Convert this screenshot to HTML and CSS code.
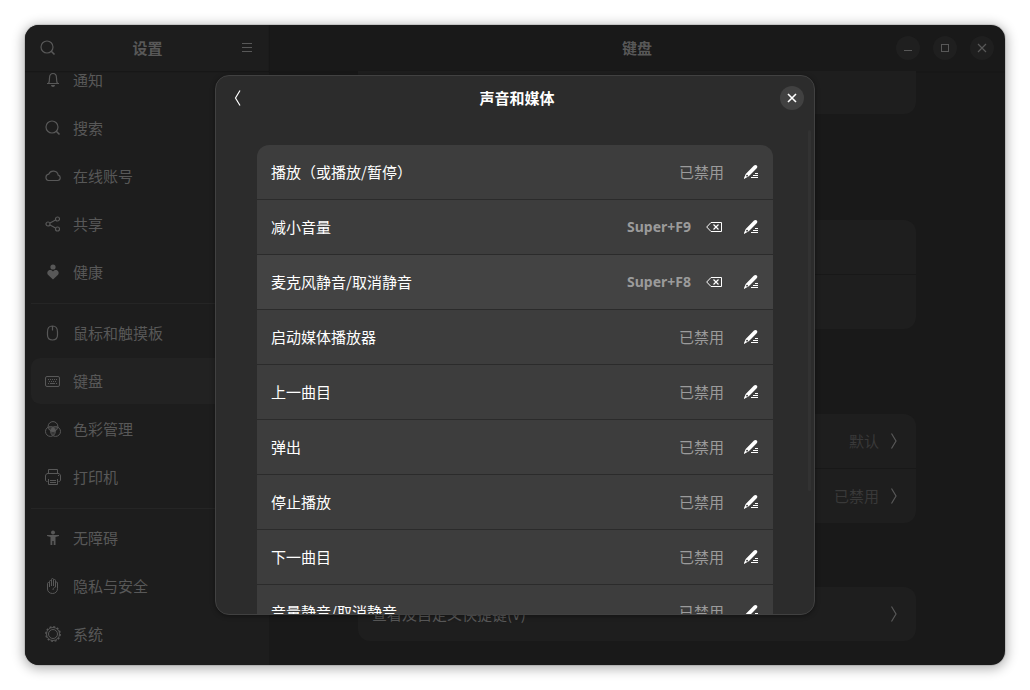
FILE: index.html
```html
<!DOCTYPE html>
<html lang="zh-CN">

<head>
    <meta charset="UTF-8">
    <meta name="viewport" content="width=device-width, initial-scale=1">
    <title>键盘</title>
    <link rel="stylesheet" href="styles.css">
</head>

<body>
    <svg class="sprite" aria-hidden="true">
        <symbol id="i-edit" viewBox="0 0 16 16">
            <path fill="currentColor" fill-rule="evenodd" d="M11 1.600c.9-.9 2-.9 2.800-.2.800.8.700 1.900-.1 2.800L5.800 12.300 1 15v-1l1.700-4z M3.400 11a.9.9 0 1 0 1.300 1.300.9.900 0 0 0-1.300-1.300z"/>
            <path fill="currentColor" d="M12 9h3v1h-3zM10 11h5v1h-5zM8 13h7v1H8z"/>
        </symbol>
        <symbol id="i-clear" viewBox="0 0 16 16">
            <path fill="none" stroke="currentColor" d="M5 3.500h10.500v9H5L.700 8z"/>
            <path fill="none" stroke="currentColor" stroke-width="1.200" d="M7.500 5.500l5 5M12.500 5.500l-5 5"/>
        </symbol>
        <symbol id="i-next" viewBox="0 0 16 16">
            <path fill="none" stroke="currentColor" stroke-width="1.200" d="M5.500.500L10 8l-4.500 7.500"/>
        </symbol>
        <symbol id="i-close" viewBox="0 0 16 16">
            <path fill="none" stroke="currentColor" stroke-width="1.600" d="M4 4l8 8M12 4l-8 8"/>
        </symbol>
        <symbol id="i-search" viewBox="0 0 16 16">
            <circle cx="7" cy="7" r="6" fill="none" stroke="currentColor" stroke-width="1.200"/>
            <path fill="none" stroke="currentColor" stroke-width="1.600" d="M11 11l3.500 3.500"/>
        </symbol>
    </svg>

    <div class="window">
        <aside class="sidebar">
            <header class="bar">
                <button class="icon-btn" aria-label="搜索"><svg class="icon"><use href="#i-search"/></svg></button>
                <h2 class="title">设置</h2>
                <button class="icon-btn" aria-label="菜单"><svg class="icon" viewBox="0 0 16 16"><path fill="currentColor" d="M3 3h10v1H3zM3 7h10v1H3zM3 11h10v1H3z"/></svg></button>
            </header>
            <nav class="nav">
                <a href="#" class="nav-item">
                    <svg class="icon" viewBox="0 0 16 16"><path fill="none" stroke="currentColor" stroke-width="1.200" d="M2 11.500h12M3.500 11.500c1-1.500 1-3 1-5.500C4.500 3 6 1.500 8 1.500S11.500 3 11.500 6c0 2.500 0 4 1 5.500"/><path fill="currentColor" d="M6 13h4c0 1.200-1 2-2 2s-2-.800-2-2z"/></svg>
                    <span>通知</span>
                </a>
                <a href="#" class="nav-item"><svg class="icon"><use href="#i-search"/></svg><span>搜索</span></a>
                <a href="#" class="nav-item">
                    <svg class="icon" viewBox="0 0 16 16"><path fill="none" stroke="currentColor" stroke-width="1.200" d="M3.500 12.500h9.300a2.700 2.700 0 0 0 .4-5.300A5 5 0 0 0 3.700 6.200a3.200 3.200 0 0 0-.2 6.300z"/></svg>
                    <span>在线账号</span>
                </a>
                <a href="#" class="nav-item">
                    <svg class="icon" viewBox="0 0 16 16"><g fill="none" stroke="currentColor" stroke-width="1.200"><circle cx="3" cy="8" r="2"/><circle cx="12.500" cy="3" r="2"/><circle cx="12.500" cy="13" r="2"/><path d="M5 7l5.500-3M5 9l5.500 3"/></g></svg>
                    <span>共享</span>
                </a>
                <a href="#" class="nav-item">
                    <svg class="icon" viewBox="0 0 16 16"><g fill="currentColor"><circle cx="8" cy="3" r="2.600"/><path d="M8 15.400L3.200 11C1.200 8.800 2.900 6 5.200 6 6.500 6 7.400 6.600 8 7.600 8.600 6.600 9.500 6 10.800 6c2.300 0 4 2.800 2 5z"/></g></svg>
                    <span>健康</span>
                </a>
                <hr class="nav-line">
                <a href="#" class="nav-item">
                    <svg class="icon" viewBox="0 0 16 16"><path fill="none" stroke="currentColor" stroke-width="1.200" d="M2.500 7c0-4 1.300-6 5-6s5 2 5 6v3c0 3-2 5-5 5s-5-2-5-5zM7.500 1v4.500"/></svg>
                    <span>鼠标和触摸板</span>
                </a>
                <a href="#" class="nav-item nav-item-active" aria-current="page">
                    <svg class="icon" viewBox="0 0 16 16"><rect x=".5" y="3.500" width="14" height="10" rx="1.500" fill="none" stroke="currentColor"/><path stroke="currentColor" stroke-dasharray="1 1" d="M3 6.500h10M4 8.500h8"/><path stroke="currentColor" d="M3 10.500h1M5 10.500h5M11 10.500h1"/></svg>
                    <span>键盘</span>
                </a>
                <a href="#" class="nav-item">
                    <svg class="icon" viewBox="0 0 16 16"><g fill="none" stroke="currentColor"><circle cx="8" cy="5.500" r="4.900"/><circle cx="5.400" cy="10.500" r="4.900"/><circle cx="10.600" cy="10.500" r="4.900"/></g><path fill="currentColor" opacity=".45" d="M3.500 6Q8 4.500 12.500 6 12 9 10.300 10.300 9.800 13 8 14.500 6.200 13 5.700 10.300 4 9 3.500 6z"/><path fill="currentColor" d="M8 6.500c1.500 1 2.400 2 2.400 3.800-1.400.6-3.400.6-4.800 0C5.600 8.500 6.500 7.500 8 6.500z"/></svg>
                    <span>色彩管理</span>
                </a>
                <a href="#" class="nav-item">
                    <svg class="icon" viewBox="0 0 16 16"><path fill="none" stroke="currentColor" d="M3.500 4.500v-4h9v4M2.500 12.500C1.200 12.500.500 12 .500 11V7c0-1.500 1-2.500 2.500-2.500h10c1.500 0 2.500 1 2.500 2.500v4c0 1-.7 1.500-2 1.500M3.500 10v5.500h9V10M5 11.500h6M5 13.500h6"/><path fill="currentColor" d="M13 6h1v1h-1z"/></svg>
                    <span>打印机</span>
                </a>
                <hr class="nav-line">
                <a href="#" class="nav-item">
                    <svg class="icon" viewBox="0 0 16 16"><g fill="currentColor"><circle cx="8" cy="2.500" r="2"/><path d="M2 5h12v1l-3.500 1v8H8.700v-4H7.300v4H5.500V7L2 6z"/></g></svg>
                    <span>无障碍</span>
                </a>
                <a href="#" class="nav-item">
                    <svg class="icon" viewBox="0 0 16 16"><path fill="none" stroke="currentColor" d="M4.500 9V3.500q0-1 1-1t1 1V8V1.500q0-1 1-1t1 1V8V2.500q0-1 1-1t1 1V9V5q0-1 1-1t1 1v5.500c0 3-2 5-5 5s-5-2-5-4.500V5.500q0-1 1-1t1 1M8 12c0-2 1-2.500 2.500-3"/></svg>
                    <span>隐私与安全</span>
                </a>
                <a href="#" class="nav-item">
                    <svg class="icon" viewBox="0 0 16 16"><g fill="none" stroke="currentColor"><circle cx="8" cy="8" r="4.500"/><circle cx="8" cy="8" r="6.500"/><circle cx="8" cy="8" r="7.200" stroke-width="1.400" stroke-dasharray="2 1.770"/></g></svg>
                    <span>系统</span>
                </a>
            </nav>
        </aside>

        <main class="main">
            <header class="bar bar-main">
                <h1 class="title">键盘</h1>
                <div class="controls">
                    <button class="round" aria-label="最小化"><svg class="icon" viewBox="0 0 16 16"><path fill="currentColor" d="M4 10h8v1H4z"/></svg></button>
                    <button class="round" aria-label="最大化"><svg class="icon" viewBox="0 0 16 16"><rect x="4.500" y="4.500" width="7" height="7" fill="none" stroke="currentColor"/></svg></button>
                    <button class="round" aria-label="关闭"><svg class="icon" viewBox="0 0 16 16"><path fill="none" stroke="currentColor" stroke-width="1.200" d="M4 4l8 8M12 4l-8 8"/></svg></button>
                </div>
            </header>
            <div class="page">
                <section class="card card-first">
                    <div class="card-row"></div>
                </section>
                <section class="card card-second">
                    <div class="card-row"></div>
                    <div class="card-row"></div>
                </section>
                <section class="card card-third">
                    <a href="#" class="card-row"><span class="card-value">默认</span><svg class="icon"><use href="#i-next"/></svg></a>
                    <a href="#" class="card-row"><span class="card-value">已禁用</span><svg class="icon"><use href="#i-next"/></svg></a>
                </section>
                <section class="card">
                    <a href="#" class="card-row"><span class="card-name">查看及自定义快捷键(V)</span><svg class="icon"><use href="#i-next"/></svg></a>
                </section>
            </div>
        </main>

        <div class="overlay">
            <div class="dialog" role="dialog" aria-labelledby="dialog-title">
                <header class="dialog-bar">
                    <button class="icon-btn" aria-label="返回"><svg class="icon" viewBox="0 0 16 16"><path fill="none" stroke="currentColor" stroke-width="1.200" d="M10 .500L5.500 8l4.500 7.500"/></svg></button>
                    <h2 class="title" id="dialog-title">声音和媒体</h2>
                    <button class="round round-light" aria-label="关闭"><svg class="icon"><use href="#i-close"/></svg></button>
                </header>
                <div class="dialog-body">
                    <ul class="list">
                        <li class="row"><span class="name">播放（或播放/暂停）</span><span class="value">已禁用</span><button class="icon-btn edit" aria-label="编辑"><svg class="icon"><use href="#i-edit"/></svg></button></li>
                        <li class="row"><span class="name">减小音量</span><span class="value key">Super+F9</span><button class="icon-btn clear" aria-label="重置"><svg class="icon"><use href="#i-clear"/></svg></button><button class="icon-btn edit" aria-label="编辑"><svg class="icon"><use href="#i-edit"/></svg></button></li>
                        <li class="row row-hover"><span class="name">麦克风静音/取消静音</span><span class="value key">Super+F8</span><button class="icon-btn clear" aria-label="重置"><svg class="icon"><use href="#i-clear"/></svg></button><button class="icon-btn edit" aria-label="编辑"><svg class="icon"><use href="#i-edit"/></svg></button></li>
                        <li class="row"><span class="name">启动媒体播放器</span><span class="value">已禁用</span><button class="icon-btn edit" aria-label="编辑"><svg class="icon"><use href="#i-edit"/></svg></button></li>
                        <li class="row"><span class="name">上一曲目</span><span class="value">已禁用</span><button class="icon-btn edit" aria-label="编辑"><svg class="icon"><use href="#i-edit"/></svg></button></li>
                        <li class="row"><span class="name">弹出</span><span class="value">已禁用</span><button class="icon-btn edit" aria-label="编辑"><svg class="icon"><use href="#i-edit"/></svg></button></li>
                        <li class="row"><span class="name">停止播放</span><span class="value">已禁用</span><button class="icon-btn edit" aria-label="编辑"><svg class="icon"><use href="#i-edit"/></svg></button></li>
                        <li class="row"><span class="name">下一曲目</span><span class="value">已禁用</span><button class="icon-btn edit" aria-label="编辑"><svg class="icon"><use href="#i-edit"/></svg></button></li>
                        <li class="row"><span class="name">音量静音/取消静音</span><span class="value">已禁用</span><button class="icon-btn edit" aria-label="编辑"><svg class="icon"><use href="#i-edit"/></svg></button></li>
                    </ul>
                    <div class="scrollbar"></div>
                </div>
            </div>
        </div>
    </div>
</body>

</html>
```

FILE: styles.css
```css
* {
    box-sizing: border-box;
}

body {
    margin: 0;
    padding: 25px;
    height: 100vh;
    overflow: hidden;
    background: #fff;
    font-family: "Noto Sans CJK SC", sans-serif;
    font-size: 15px;
    line-height: 22px;
}

a {
    color: inherit;
    text-decoration: none;
}

button {
    padding: 0;
    border: none;
    background: none;
    color: inherit;
    font: inherit;
    cursor: pointer;
}

.sprite {
    display: none;
}

.icon {
    display: block;
    flex: none;
    width: 16px;
    height: 16px;
}

.icon-btn {
    flex: none;
}

.window {
    position: relative;
    display: flex;
    height: 100%;
    overflow: hidden;
    border-radius: 14px;
    background: #191919;
    color: #585858;
    box-shadow: 0 2px 12px 2px rgba(0, 0, 0, 0.3), 0 0 0 1px rgba(0, 0, 0, 0.1);
}

/* Header bars */
.bar {
    display: flex;
    flex: none;
    align-items: center;
    justify-content: space-between;
    height: 46px;
    padding: 0 14px 0 15px;
    box-shadow: 0 1px 1px #171717;
}

.title {
    margin: 0;
    font-size: 15px;
    font-weight: 700;
}

.bar-main {
    display: grid;
    grid-template-columns: 1fr auto 1fr;
    padding: 0 11px;
}

.bar-main .title {
    grid-column: 2;
}

.controls {
    display: flex;
    justify-content: flex-end;
    gap: 13px;
}

.round {
    display: grid;
    place-items: center;
    width: 24px;
    height: 24px;
    border-radius: 50%;
    background: #1f1f1f;
}

.round-light {
    background: #414141;
    color: #fff;
}

/* Sidebar */
.sidebar {
    display: flex;
    flex: none;
    flex-direction: column;
    width: 244px;
    background: #1d1d1d;
}

.nav {
    display: flex;
    flex: 1;
    flex-direction: column;
    justify-content: flex-end;
    gap: 2px;
    min-height: 0;
    padding: 0 6px 8px;
    overflow: hidden;
}

.nav-item {
    display: flex;
    flex: none;
    align-items: center;
    gap: 12px;
    height: 46px;
    padding: 0 14px;
    border-radius: 9px;
}

.nav-item-active {
    background: #222;
}

.nav-line {
    flex: none;
    width: 100%;
    height: 1px;
    margin: 6px 0 4px;
    border: none;
    background: #252525;
}

/* Page behind the dialog */
.main {
    display: flex;
    flex: 1;
    flex-direction: column;
    min-width: 0;
}

.page {
    display: flex;
    flex: 1;
    flex-direction: column;
    align-items: center;
    justify-content: flex-end;
    min-height: 0;
    padding: 0 24px 24px;
    overflow: hidden;
}

.card {
    flex: none;
    width: 100%;
    max-width: 558px;
    border-radius: 12px;
    background: #1e1e1e;
}

.card-first {
    margin-bottom: 106px;
}

.card-second {
    margin-bottom: 85px;
}

.card-third {
    margin-bottom: 64px;
}

.card-row {
    display: flex;
    align-items: center;
    justify-content: flex-end;
    gap: 7px;
    height: 54px;
    padding: 0 14px;
}

.card-row + .card-row {
    height: 55px;
    border-top: 1px solid #181818;
}

.card-name {
    margin-right: auto;
}

.card-value {
    color: #393939;
}

/* Dialog */
.overlay {
    position: absolute;
    inset: 0;
    display: flex;
    align-items: center;
    justify-content: center;
    padding: 50px 24px;
}

.dialog {
    display: flex;
    flex-direction: column;
    width: 100%;
    max-width: 600px;
    height: 100%;
    overflow: hidden;
    border: 1px solid #414141;
    border-radius: 14px;
    background: #2c2c2c;
    color: #fff;
    box-shadow: 0 1px 5px rgba(0, 0, 0, 0.4);
}

.dialog-bar {
    display: grid;
    grid-template-columns: 1fr auto 1fr;
    flex: none;
    align-items: center;
    height: 44px;
    padding: 0 10px 0 14px;
}

.dialog-bar .round {
    justify-self: end;
}

.dialog-bar .icon-btn {
    justify-self: start;
}

.dialog-body {
    position: relative;
    flex: 1;
    min-height: 0;
    padding: 25px 41px;
    overflow: hidden;
}

.scrollbar {
    position: absolute;
    top: 10px;
    right: 3px;
    width: 3px;
    height: 73%;
    border-radius: 2px;
    background: #323232;
}

.list {
    margin: 0;
    padding: 0;
    overflow: hidden;
    list-style: none;
    border-radius: 12px;
    background: #3d3d3d;
}

.row {
    display: flex;
    align-items: center;
    height: 55px;
    padding: 0 14px;
    border-bottom: 1px solid #2b2b2b;
}

.row-hover {
    background: #434343;
}

.name {
    flex: 1;
}

.value {
    color: #9b9b9b;
}

.key {
    font-family: "Noto Sans", sans-serif;
    font-size: 14px;
    font-weight: 700;
}

.clear {
    margin-left: 15px;
}

.edit {
    margin-left: 19px;
}

.clear + .edit {
    margin-left: 21px;
}
```
